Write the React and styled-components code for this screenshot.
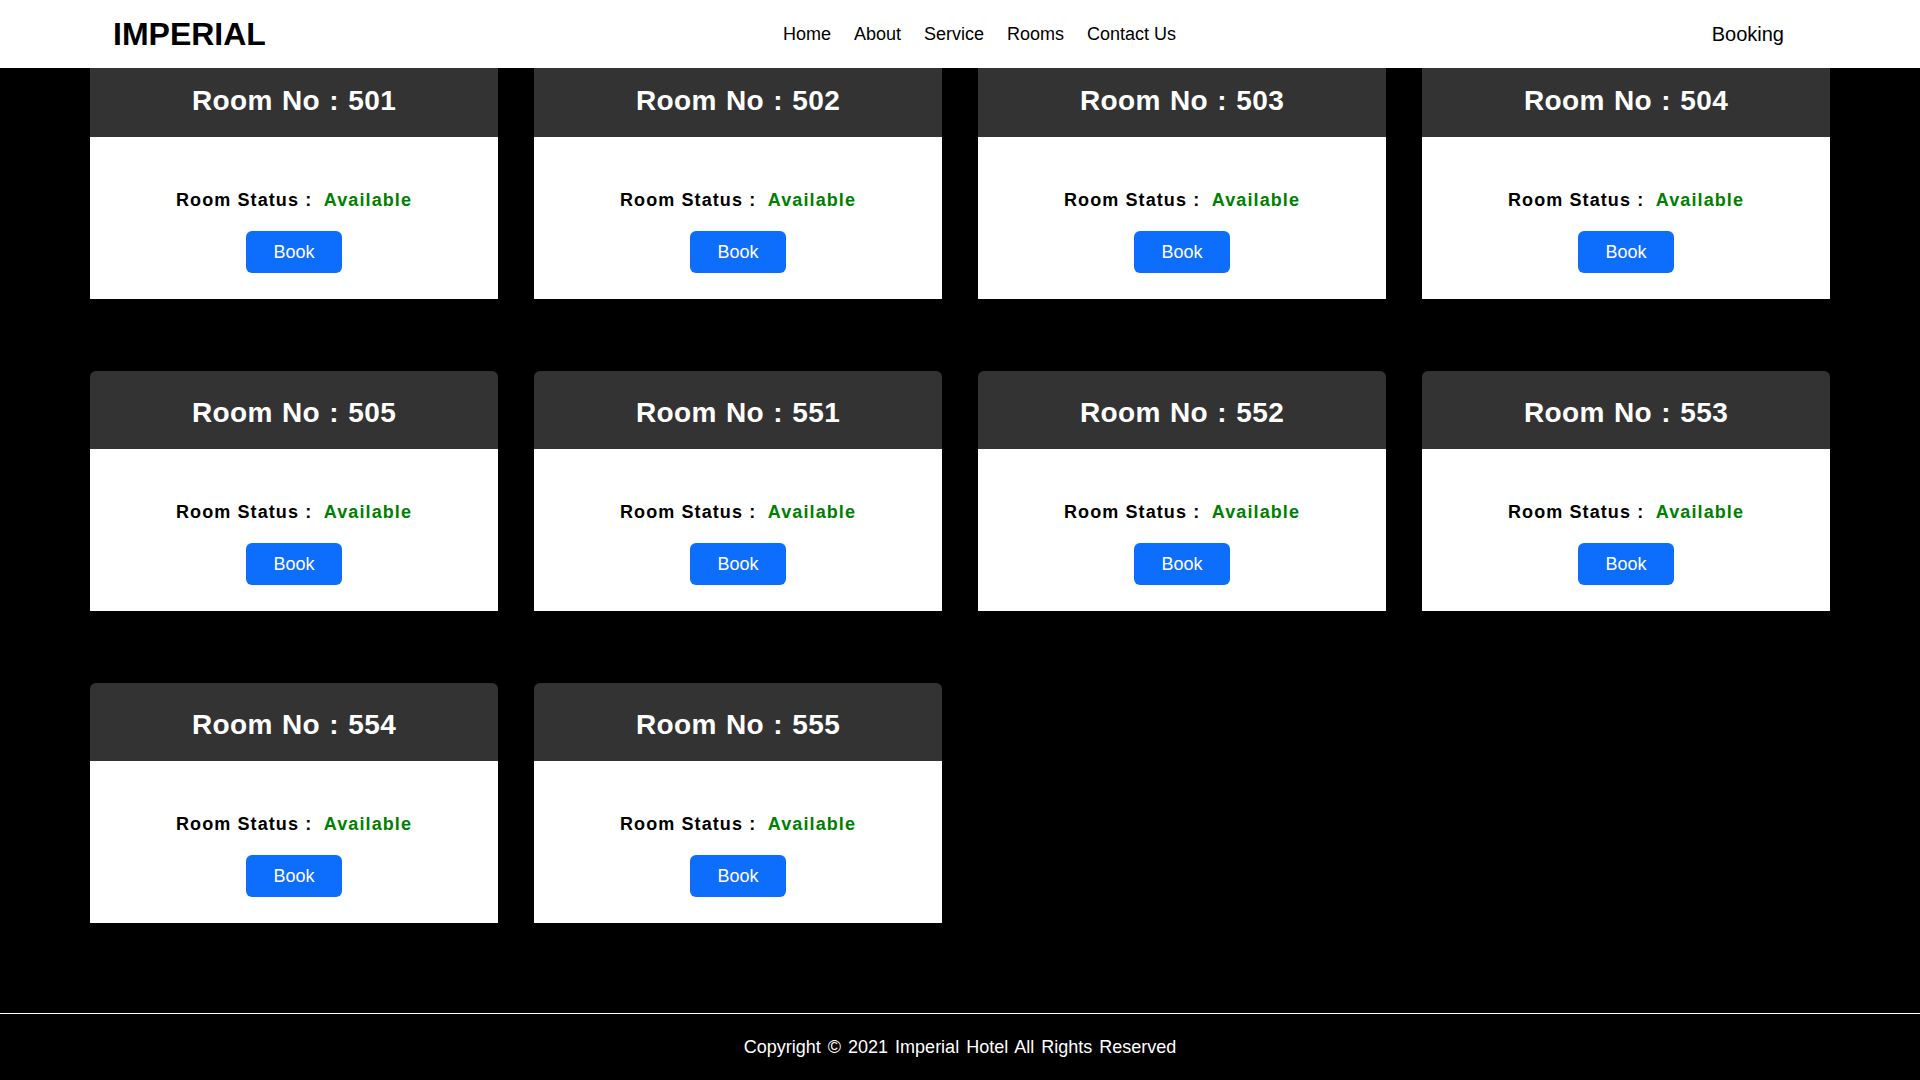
import React from "react";
import styled, { createGlobalStyle } from "styled-components";

const GlobalStyle = createGlobalStyle`
  * { box-sizing: border-box; }
  html, body { margin: 0; padding: 0; }
  body {
    background: #000;
    font-family: "Liberation Sans", Arial, sans-serif;
  }
`;

const NavBar = styled.header`
  position: fixed;
  top: 0;
  left: 0;
  right: 0;
  height: 68px;
  background: #fff;
  display: grid;
  grid-template-columns: 1fr auto 1fr;
  align-items: center;
  padding: 0 136px 0 113px;
  z-index: 10;
`;

const Logo = styled.div`
  font-size: 32px;
  font-weight: 700;
  color: #000;
  line-height: 1;
`;

const NavLinks = styled.nav`
  display: flex;
  gap: 23px;
  transform: translateX(31px);
`;

const NavLink = styled.a`
  font-size: 18px;
  color: #000;
  text-decoration: none;
  line-height: 1;
`;

const BookingLink = styled.a`
  justify-self: end;
  font-size: 20px;
  color: #000;
  text-decoration: none;
  line-height: 1;
`;

const Main = styled.main`
  padding: 59px 90px 90px;
  display: grid;
  grid-template-columns: repeat(4, 408px);
  column-gap: 36px;
  row-gap: 72px;
`;

const Card = styled.div`
  display: flex;
  flex-direction: column;
`;

const CardHeader = styled.div`
  height: 78px;
  background: #333333;
  border-radius: 6px 6px 0 0;
  display: flex;
  align-items: center;
  justify-content: center;
  padding-top: 5px;
`;

const CardTitle = styled.h2`
  margin: 0;
  color: #fff;
  font-size: 28px;
  font-weight: 700;
  letter-spacing: 0.4px;
  word-spacing: 1px;
  line-height: 1;
`;

const CardBody = styled.div`
  background: #fff;
  height: 162px;
  padding: 53px 0 26px;
  display: flex;
  flex-direction: column;
  align-items: center;
`;

const Status = styled.div`
  font-size: 18px;
  font-weight: 700;
  letter-spacing: 1.1px;
  line-height: 21px;
  color: #000;
  margin-bottom: 20px;
  white-space: pre;
`;

const StatusValue = styled.span`
  color: #008000;
`;

const BookButton = styled.button`
  width: 96px;
  height: 42px;
  border: none;
  border-radius: 6px;
  background: #0d6efd;
  color: #fff;
  font-family: "Liberation Sans", Arial, sans-serif;
  font-size: 18px;
  cursor: pointer;
  padding: 0;
`;

const Footer = styled.footer`
  border-top: 1px solid #fff;
  height: 67px;
  display: flex;
  align-items: center;
  justify-content: center;
  color: #fff;
  font-size: 18px;
  word-spacing: 2px;
`;

const rooms = ["501", "502", "503", "504", "505", "551", "552", "553", "554", "555"];

export default function App() {
  return (
    <>
      <GlobalStyle />
      <NavBar>
        <Logo>IMPERIAL</Logo>
        <NavLinks>
          <NavLink href="#">Home</NavLink>
          <NavLink href="#">About</NavLink>
          <NavLink href="#">Service</NavLink>
          <NavLink href="#">Rooms</NavLink>
          <NavLink href="#">Contact Us</NavLink>
        </NavLinks>
        <BookingLink href="#">Booking</BookingLink>
      </NavBar>
      <Main>
        {rooms.map((r) => (
          <Card key={r}>
            <CardHeader>
              <CardTitle>Room No : {r}</CardTitle>
            </CardHeader>
            <CardBody>
              <Status>
                Room Status :  <StatusValue>Available</StatusValue>
              </Status>
              <BookButton>Book</BookButton>
            </CardBody>
          </Card>
        ))}
      </Main>
      <Footer>Copyright © 2021 Imperial Hotel All Rights Reserved</Footer>
    </>
  );
}
